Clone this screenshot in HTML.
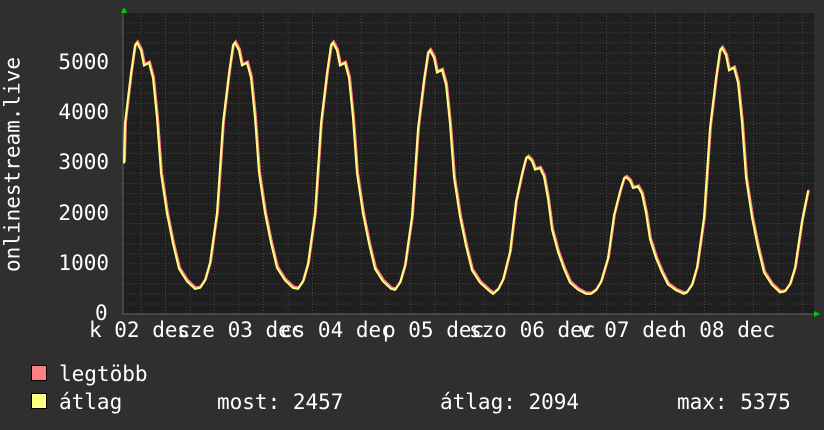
<!DOCTYPE html>
<html><head><meta charset="utf-8"><style>
html,body{margin:0;padding:0;background:#2f2f2f;}
#c{position:relative;width:824px;height:430px;overflow:hidden;font-family:"DejaVu Sans Mono","Liberation Mono",monospace;color:#fff;font-size:21px;}
.t{position:absolute;white-space:pre;line-height:1;}
.sq{position:absolute;width:14px;height:14px;border:1px solid #000;}
</style></head><body><div id="c">
<svg id="g" width="824" height="430" style="position:absolute;left:0;top:0"></svg>
<div class="t" style="left:-99px;top:154px;width:224px;text-align:center;transform:rotate(-90deg);">onlinestream.live</div>
<div class="t" style="right:715px;top:52px">5000</div>
<div class="t" style="right:715px;top:102px">4000</div>
<div class="t" style="right:715px;top:152px">3000</div>
<div class="t" style="right:715px;top:203px">2000</div>
<div class="t" style="right:715px;top:253px">1000</div>
<div class="t" style="left:95px;top:303px">0</div>
<div class="t" style="left:89px;top:320px">k 02 dec</div>
<div class="t" style="left:177px;top:320px">sze 03 dec</div>
<div class="t" style="left:280px;top:320px">cs 04 dec</div>
<div class="t" style="left:383px;top:320px">p 05 dec</div>
<div class="t" style="left:469px;top:320px">szo 06 dec</div>
<div class="t" style="left:579px;top:320px">v 07 dec</div>
<div class="t" style="left:674px;top:320px">h 08 dec</div>
<div class="sq" style="left:31px;top:365px;background:#ff8080"></div>
<div class="sq" style="left:31px;top:393px;background:#ffff80"></div>
<div class="t" style="left:59px;top:364px">legtöbb</div>
<div class="t" style="left:59px;top:392px">átlag</div>
<div class="t" style="left:217px;top:392px">most: 2457</div>
<div class="t" style="left:440px;top:392px">átlag: 2094</div>
<div class="t" style="left:677px;top:392px">max: 5375</div>
</div>
<script>
var s='';
var L=123,R=814,T=13,B=314;
s+='<rect x="'+L+'" y="'+T+'" width="'+(R-L)+'" height="'+(B-T)+'" fill="#1f1f1f"/>';
for(var v=200;v<=5800;v+=200){var y=B-v*0.0502;if(y<T)break;s+='<line x1="'+L+'" x2="'+R+'" y1="'+y.toFixed(1)+'" y2="'+y.toFixed(1)+'" stroke="'+(v%1000==0?'#6a3030':'#464646')+'" stroke-dasharray="1,2"/>';}
for(var x=190-98*1;x<R;x+=24.5){if(x<=L)continue;var maj=Math.abs(((x-190)%98+98)%98)<1;s+='<line x1="'+x.toFixed(1)+'" x2="'+x.toFixed(1)+'" y1="'+T+'" y2="'+B+'" stroke="'+(maj?'#6a3030':'#464646')+'" stroke-dasharray="1,2"/>';}
s+='<line x1="'+L+'" x2="818" y1="'+B+'" y2="'+B+'" stroke="#666"/><line x1="'+L+'" x2="'+L+'" y1="10" y2="'+B+'" stroke="#666"/>';
s+='<polygon points="121,13 127,13 124,7" fill="#0c0"/><polygon points="814,311 814,317 820,314" fill="#0c0"/>';
var shape=[[-35,0],[-30,150],[-25,500],[-18,1500],[-12,3300],[-6,4300],[-2,4850],[0,4900],[4,4750],[7,4450],[12,4500],[16,4200],[20,3400],[24,2300],[30,1500],[36,900],[42,400],[50,150],[58,0]];
var days=[[137,5350],[235,5350],[333,5350],[430,5200],[528,3100],[626,2700],[722,5250],[820,5000]];
var mins=[500,520,500,480,400,400,430,450];
var pts=[];
days.forEach(function(d,i){var f=(d[1]-mins[i])/4850;shape.forEach(function(p){var x=d[0]+p[0];if(x>=124&&x<=806)pts.push([x,mins[i]+f*p[1]]);});});
pts.sort(function(a,b){return a[0]-b[0]});
pts.unshift([124,3000]);pts.push([808,2450]);
var ps=pts.map(function(p){return p[0]+','+(B-p[1]*0.0502).toFixed(1)}).join(' ');
var ps2=pts.map(function(p){return (p[0]+0.7)+','+(B-p[1]*0.0502-1.2).toFixed(1)}).join(' ');
s+='<polyline points="'+ps2+'" fill="none" stroke="#ff7f7f" stroke-width="2.5"/>';
s+='<polyline points="'+ps+'" fill="none" stroke="#ffff80" stroke-width="2"/>';
document.getElementById('g').innerHTML=s;
</script>
</body></html>
